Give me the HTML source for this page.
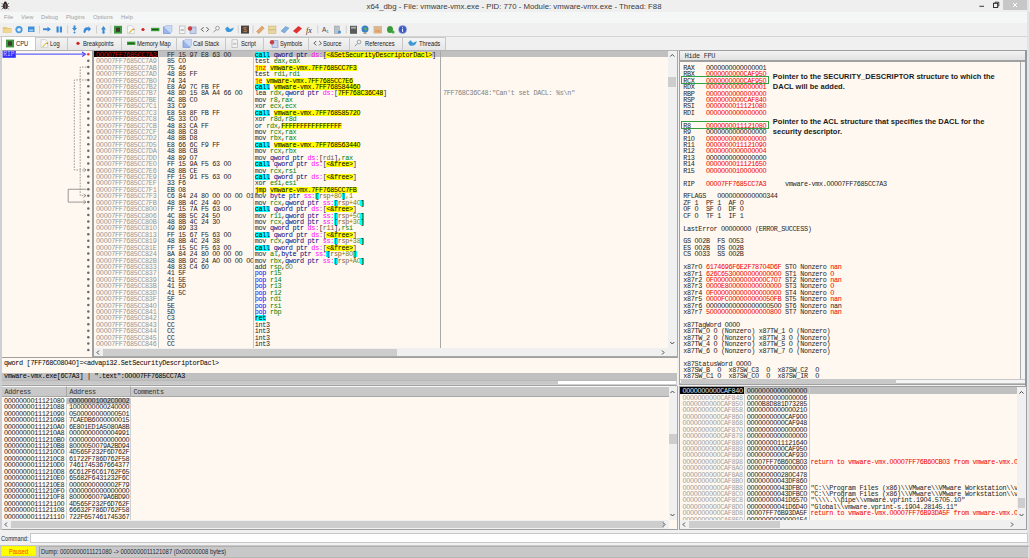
<!DOCTYPE html>
<html><head><meta charset="utf-8"><style>
*{margin:0;padding:0;box-sizing:border-box}
html,body{width:1030px;height:558px;overflow:hidden;background:#F0F0F0}
body{position:relative;font-family:"Liberation Sans",sans-serif}
.a{position:absolute}
.m{font-family:"Liberation Mono",monospace;font-size:6.8px;letter-spacing:-0.31px;line-height:6.43px;white-space:pre}
.s{font-family:"Liberation Sans",sans-serif;white-space:pre}
.cream{background:#FFF8F0}
.k{color:#262626}
.C{background:linear-gradient(transparent 0.62px,#00FFFF 0.62px,#00FFFF 7.05px,transparent 7.05px);color:#000}
.R{background:linear-gradient(transparent 0.62px,#00FFFF 0.62px,#00FFFF 7.05px,transparent 7.05px);color:#000}
.J{background:linear-gradient(transparent 0.62px,#FFFF00 0.62px,#FFFF00 7.05px,transparent 7.05px);color:#FF0000}
.M{background:linear-gradient(transparent 0.62px,#FFFF00 0.62px,#FFFF00 7.05px,transparent 7.05px);color:#000}
.Y{background:linear-gradient(transparent 0.62px,#FFFF00 0.62px,#FFFF00 7.05px,transparent 7.05px);color:#000}
.r{color:#008000}
.z{color:#000080}
.g{color:#FF00FF}
.b{background:linear-gradient(transparent 0.62px,#00FFFF 0.62px,#00FFFF 7.05px,transparent 7.05px);color:#000}
.q{color:#806030}
.n{color:#808000}
.p{color:#0000FF}
.red{color:#F00000}
.gr{color:#969696}
.tab{position:absolute;top:37px;height:13px;background:linear-gradient(#F4F4F4,#E6E6E6);border:1px solid #C8C8C8;border-bottom:none}
.tt{position:absolute;top:38.5px;font-size:6.3px;transform:scaleX(0.92);transform-origin:0 0;line-height:10px;color:#1A1A1A;white-space:pre}
.hdr{position:absolute;background:#C8C8C8;border-right:1px solid #A8A8A8;border-bottom:1px solid #A8A8A8;border-top:1px solid #F8F8F8}
</style></head>
<body>
<div class="a " style="left:0px;top:0px;width:1030px;height:11.5px;background:#EFEFEF"></div><div class="a s" style="left:366.6px;top:0.5px;width:300px;height:11px;font-size:7.8px;line-height:11px;color:#3A3A3A">x64_dbg - File: vmware-vmx.exe - PID: 770 - Module: vmware-vmx.exe - Thread: F88</div><div class="a " style="left:1003px;top:0px;width:24px;height:9.7px;background:#C7C7C7"></div><div class="a " style="left:0px;top:11.5px;width:1030px;height:11.5px;background:#F5F7F7"></div><div class="a s" style="left:4px;top:12.3px;width:40px;height:10px;font-size:6.2px;line-height:10px;color:#A0A0A0;transform:scaleX(0.93);transform-origin:0 0">File</div><div class="a s" style="left:21px;top:12.3px;width:40px;height:10px;font-size:6.2px;line-height:10px;color:#A0A0A0;transform:scaleX(0.93);transform-origin:0 0">View</div><div class="a s" style="left:41px;top:12.3px;width:40px;height:10px;font-size:6.2px;line-height:10px;color:#A0A0A0;transform:scaleX(0.93);transform-origin:0 0">Debug</div><div class="a s" style="left:66px;top:12.3px;width:40px;height:10px;font-size:6.2px;line-height:10px;color:#A0A0A0;transform:scaleX(0.93);transform-origin:0 0">Plugins</div><div class="a s" style="left:93px;top:12.3px;width:40px;height:10px;font-size:6.2px;line-height:10px;color:#A0A0A0;transform:scaleX(0.93);transform-origin:0 0">Options</div><div class="a s" style="left:121px;top:12.3px;width:40px;height:10px;font-size:6.2px;line-height:10px;color:#A0A0A0;transform:scaleX(0.93);transform-origin:0 0">Help</div><div class="a " style="left:0px;top:23px;width:1030px;height:12.5px;background:#F0F0F0"></div><svg class="a" style="left:0;top:0" width="420" height="36"><g><ellipse cx="5.3" cy="6" rx="2.6" ry="3.3" fill="#3A2A28"/><circle cx="5.3" cy="2.8" r="1.3" fill="#2A2020"/><path d="M1.5 3 L3 4.5 M9 3 L7.5 4.5 M1.2 6.5 H3 M9.4 6.5 H7.6 M1.5 9.5 L3 8 M9 9.5 L7.5 8" stroke="#707070" stroke-width="0.9"/><line x1="5.3" y1="4" x2="5.3" y2="9" stroke="#A0A8B0" stroke-width="0.6"/></g><rect x="979.4" y="5.8" width="4.6" height="0.9" fill="#202020"/></svg><svg class="a" style="left:0;top:0" width="1030" height="36"><rect x="979.4" y="5.8" width="4.6" height="0.9" fill="#202020"/><rect x="993.5" y="3.3" width="4.2" height="4.2" fill="none" stroke="#202020" stroke-width="0.9"/><path d="M995 3.2 V2.2 H998.8 V6 H997.8" fill="none" stroke="#202020" stroke-width="0.8"/><path d="M1013 3 L1017 7 M1017 3 L1013 7" stroke="#FFFFFF" stroke-width="1"/><path d="M2.8 27 H6.5 L7.5 28 H11.5 V32.7 H2.8 Z" fill="#E6C57A"/><rect x="3.5" y="29" width="7.5" height="3.2" fill="#F0D890"/><circle cx="19" cy="29.6" r="3.6" fill="#4A9BE0"/><circle cx="19" cy="29.8" r="1.8" fill="#E8F2FA"/><rect x="17.5" y="26" width="2" height="2" fill="#4A9BE0"/><rect x="28" y="26.5" width="6.5" height="5.5" fill="#3D8FD8"/><rect x="29.2" y="29.5" width="4" height="1.8" fill="#A8D0F0"/><rect x="39.2" y="25.5" width="0.8" height="8" fill="#C8C8C8"/><path d="M43 28.3 H47.5 V26.8 L51 29.3 L47.5 31.8 V30.3 H43 Z" fill="#3A8AD8"/><rect x="56.5" y="26.5" width="2.2" height="6" fill="#3A8AD8"/><rect x="59.8" y="26.5" width="2.2" height="6" fill="#3A8AD8"/><rect x="67.3" y="25.5" width="0.8" height="8" fill="#C8C8C8"/><path d="M73.5 25.5 H75.5 V28 H77 L74.5 31 L72 28 H73.5 Z" fill="#3A8AD8"/><circle cx="74.5" cy="32.6" r="1" fill="#3A8AD8"/><path d="M83.5 31.5 Q84 26.5 88.5 27.5 V26.3 L91 29 L88.5 31.7 V30.2 Q86 29.5 85.5 32 Z" fill="#3A8AD8"/><circle cx="84.5" cy="32" r="1" fill="#3A8AD8"/><rect x="96" y="25.5" width="0.8" height="8" fill="#C8C8C8"/><path d="M102.5 33.5 V29.5 H101 L103.5 26 L106 29.5 H104.5 V33.5 Z" fill="#3A8AD8"/><circle cx="103.5" cy="32.6" r="1" fill="#3A8AD8"/><rect x="110.4" y="25.5" width="0.8" height="8" fill="#C8C8C8"/><g id="ic_cpu"><rect x="114" y="25.8" width="8" height="7.8" fill="#3C9A3C"/><rect x="116" y="27.6" width="4" height="4.2" fill="#403830"/></g><g id="ic_log"><path d="M127.5 25.8 H132 L134.2 28 V33.6 H127.5 Z" fill="#F8F8F8" stroke="#B8B8B8" stroke-width="0.5"/><path d="M129 33 L133.5 28.5" stroke="#D8C040" stroke-width="1.1"/><circle cx="134" cy="29.5" r="0.6" fill="#E04040"/></g><g id="ic_bp"><circle cx="143" cy="29.5" r="1.6" fill="#D02020"/></g><g id="ic_mem"><rect x="151" y="27.8" width="8.4" height="3.4" fill="#3AA03A"/><rect x="152" y="29" width="6.4" height="1" fill="#205020"/></g><g id="ic_cs"><rect x="163.5" y="27" width="7" height="6.5" fill="#98B4EC" stroke="#6A88C8" stroke-width="0.6"/><path d="M164 27 L166 25.5 H172 V31.5 L170.5 33" fill="#C8D8F4" stroke="#8AA0D0" stroke-width="0.4"/></g><g id="ic_script"><rect x="179.5" y="26" width="5.5" height="7.5" fill="#F4F4F4" stroke="#A8A8A8" stroke-width="0.6"/><rect x="180.5" y="29" width="3.5" height="2" fill="#C8C8C8"/></g><g id="ic_sym"><rect x="190" y="27" width="6" height="6.5" fill="#C8D4EC" stroke="#6080C0" stroke-width="0.5"/><circle cx="190" cy="28.5" r="2.2" fill="#C84040"/></g><g id="ic_src"><path d="M203.5 27.2 L201.3 29.4 L203.5 31.6 M206.5 27.2 L208.7 29.4 L206.5 31.6" fill="none" stroke="#404040" stroke-width="0.9"/></g><g id="ic_refs"><circle cx="217.5" cy="28.2" r="1.9" fill="none" stroke="#909090" stroke-width="0.8"/><path d="M216 29.8 L213.5 32.3" stroke="#909090" stroke-width="1"/></g><g id="ic_thr"><path d="M225 28.5 Q228 27 230 29 L234 27.5 L232.5 30.5 Q230 33 226.5 31.5 Z" fill="#3A98D8"/><circle cx="227.5" cy="28" r="1.2" fill="#3A98D8"/></g><rect x="237.8" y="25.5" width="0.8" height="8" fill="#C8C8C8"/><rect x="241" y="25.6" width="8" height="8" fill="#4A4440"/><text x="243" y="32.3" font-family="Liberation Sans" font-size="7" fill="#D08850">$</text><rect x="252.6" y="25.5" width="0.8" height="8" fill="#C8C8C8"/><path d="M256.5 31.5 L262 26 L264.2 28.2 L258.7 33.7 Z" fill="#E0A870" stroke="#C88850" stroke-width="0.5"/><rect x="268.5" y="26" width="7.5" height="3.5" fill="#E8D8A0" stroke="#C0A060" stroke-width="0.4"/><rect x="268.5" y="30" width="7.5" height="3.5" fill="#E8D8A0" stroke="#C0A060" stroke-width="0.4"/><path d="M281 31 L285.5 26.5 L289 28 L284.5 33 Z" fill="#80B0E0" stroke="#5080C0" stroke-width="0.4"/><path d="M293 31 L298.5 26 L302 28.5 L296.5 33.5 Z" fill="#E03030"/><text x="306" y="32.5" font-family="Liberation Serif" font-style="italic" font-size="8" fill="#303030">fx</text><rect x="317.4" y="25.5" width="0.8" height="8" fill="#C8C8C8"/><text x="322" y="32.3" font-family="Liberation Sans" font-size="6.5" fill="#404040">A</text><text x="326.5" y="32.5" font-family="Liberation Sans" font-size="4" fill="#404040">1</text><rect x="334.3" y="26" width="5" height="7.5" fill="#B8C0C8" stroke="#808890" stroke-width="0.4"/><circle cx="339.5" cy="32" r="1.5" fill="#3A90D8"/><rect x="345.8" y="25.5" width="0.8" height="8" fill="#C8C8C8"/><rect x="350" y="25.8" width="7" height="8" fill="#5A5A5A"/><rect x="351" y="26.8" width="5" height="1.8" fill="#B0B0B0"/><circle cx="365" cy="29" r="3.5" fill="#3A80C8"/><path d="M363 27 Q365 28.5 366.5 27.5 Q367.5 30 365.5 31" fill="#60A860"/><rect x="363.5" y="32.5" width="3" height="1.2" fill="#A08060"/><rect x="373.5" y="26" width="8.5" height="7.5" fill="#D8B890"/><rect x="375" y="30" width="5.5" height="2.5" fill="#E8A060"/><ellipse cx="390" cy="29.5" rx="3" ry="3.6" fill="#3A9A3A"/><circle cx="393" cy="32" r="1.6" fill="#40B040"/><circle cx="402.6" cy="29.5" r="4" fill="#3A58C8" stroke="#A8B0C8" stroke-width="0.5"/><rect x="402.1" y="28.6" width="1" height="3.3" fill="#FFF"/><circle cx="402.6" cy="27.3" r="0.55" fill="#FFF"/></svg><div class="a " style="left:0px;top:35.5px;width:1030px;height:14.5px;background:#F0F0F0"></div><div class="a " style="left:0px;top:35.6px;width:1030px;height:0.9px;background:#D4D4D4"></div><div class="tab" style="left:35px;width:33px"></div><div class="tt" style="left:50px">Log</div><div class="tab" style="left:67px;width:55px"></div><div class="tt" style="left:83px">Breakpoints</div><div class="tab" style="left:121px;width:56px"></div><div class="tt" style="left:137px">Memory Map</div><div class="tab" style="left:176px;width:50px"></div><div class="tt" style="left:193px">Call Stack</div><div class="tab" style="left:225px;width:39px"></div><div class="tt" style="left:241px">Script</div><div class="tab" style="left:263px;width:45.5px"></div><div class="tt" style="left:280px">Symbols</div><div class="tab" style="left:307.5px;width:42.0px"></div><div class="tt" style="left:323px">Source</div><div class="tab" style="left:348.5px;width:54.0px"></div><div class="tt" style="left:365px">References</div><div class="tab" style="left:401.5px;width:44.5px"></div><div class="tt" style="left:419px">Threads</div><div class="a" style="left:1px;top:36px;width:35px;height:14.5px;background:#FFF;border:1px solid #C8C8C8;border-bottom:none"></div><div class="tt" style="left:16px">CPU</div><svg class="a" style="left:0;top:0" width="450" height="52"><use href="#ic_cpu" transform="translate(-108,13.8)"/><use href="#ic_log" transform="translate(-86.5,13.8)"/><use href="#ic_bp" transform="translate(-65,13.8)"/><use href="#ic_mem" transform="translate(-24,13.8)"/><use href="#ic_cs" transform="translate(19.5,13.8)"/><use href="#ic_script" transform="translate(52.5,13.8)"/><use href="#ic_sym" transform="translate(82,13.8)"/><use href="#ic_src" transform="translate(112.7,13.8)"/><use href="#ic_refs" transform="translate(141.5,13.8)"/><use href="#ic_thr" transform="translate(183,13.8)"/></svg><div class="a " style="left:0px;top:49.5px;width:1030px;height:0.8px;background:#C8C8C8"></div><div class="a " style="left:1px;top:50px;width:677px;height:308px;background:#A8A8A8"></div><div class="a cream" style="left:2px;top:50px;width:90.3px;height:307px;"></div><div class="a " style="left:92.3px;top:50px;width:1.4px;height:307px;background:#A0A0A0"></div><div class="a cream" style="left:93.7px;top:50px;width:574.3px;height:298.3px;"></div><div class="a " style="left:2px;top:50px;width:675px;height:0.9px;background:#B4B4B4"></div><div class="a " style="left:158px;top:51.0px;width:510px;height:6.43px;background:#C0C0C0"></div><div class="a " style="left:93.8px;top:51.0px;width:64px;height:6.43px;background:#000"></div><div class="a " style="left:157.7px;top:51.0px;width:0.8px;height:297.3px;background:#C8C8C8"></div><div class="a " style="left:253.3px;top:51.0px;width:0.8px;height:297.3px;background:#C8C8C8"></div><div class="a " style="left:440.2px;top:51.0px;width:0.8px;height:297.3px;background:#A8A8A8"></div><div class="a m" style="left:96.1px;top:51.80px;"><span style="color:#D01010">OOOO7FF7685CC7A3</span></div><div class="a m" style="left:96.1px;top:58.23px;"><span style="color:#969696">OOOO7FF7685CC7A9</span></div><div class="a m" style="left:96.1px;top:64.66px;"><span style="color:#969696">OOOO7FF7685CC7AB</span></div><div class="a m" style="left:96.1px;top:71.09px;"><span style="color:#969696">OOOO7FF7685CC7AD</span></div><div class="a m" style="left:96.1px;top:77.52px;"><span style="color:#969696">OOOO7FF7685CC7BO</span></div><div class="a m" style="left:96.1px;top:83.95px;"><span style="color:#969696">OOOO7FF7685CC7B2</span></div><div class="a m" style="left:96.1px;top:90.38px;"><span style="color:#969696">OOOO7FF7685CC7B7</span></div><div class="a m" style="left:96.1px;top:96.81px;"><span style="color:#969696">OOOO7FF7685CC7BE</span></div><div class="a m" style="left:96.1px;top:103.24px;"><span style="color:#969696">OOOO7FF7685CC7C1</span></div><div class="a m" style="left:96.1px;top:109.67px;"><span style="color:#969696">OOOO7FF7685CC7C3</span></div><div class="a m" style="left:96.1px;top:116.10px;"><span style="color:#969696">OOOO7FF7685CC7C8</span></div><div class="a m" style="left:96.1px;top:122.53px;"><span style="color:#969696">OOOO7FF7685CC7CB</span></div><div class="a m" style="left:96.1px;top:128.96px;"><span style="color:#969696">OOOO7FF7685CC7CF</span></div><div class="a m" style="left:96.1px;top:135.39px;"><span style="color:#969696">OOOO7FF7685CC7D2</span></div><div class="a m" style="left:96.1px;top:141.82px;"><span style="color:#969696">OOOO7FF7685CC7D5</span></div><div class="a m" style="left:96.1px;top:148.25px;"><span style="color:#969696">OOOO7FF7685CC7DA</span></div><div class="a m" style="left:96.1px;top:154.68px;"><span style="color:#969696">OOOO7FF7685CC7DD</span></div><div class="a m" style="left:96.1px;top:161.11px;"><span style="color:#969696">OOOO7FF7685CC7EO</span></div><div class="a m" style="left:96.1px;top:167.54px;"><span style="color:#969696">OOOO7FF7685CC7E6</span></div><div class="a m" style="left:96.1px;top:173.97px;"><span style="color:#969696">OOOO7FF7685CC7E9</span></div><div class="a m" style="left:96.1px;top:180.40px;"><span style="color:#969696">OOOO7FF7685CC7EF</span></div><div class="a m" style="left:96.1px;top:186.83px;"><span style="color:#969696">OOOO7FF7685CC7F1</span></div><div class="a m" style="left:96.1px;top:193.26px;"><span style="color:#969696">OOOO7FF7685CC7F3</span></div><div class="a m" style="left:96.1px;top:199.69px;"><span style="color:#969696">OOOO7FF7685CC7FB</span></div><div class="a m" style="left:96.1px;top:206.12px;"><span style="color:#969696">OOOO7FF7685CC8OO</span></div><div class="a m" style="left:96.1px;top:212.55px;"><span style="color:#969696">OOOO7FF7685CC8O6</span></div><div class="a m" style="left:96.1px;top:218.98px;"><span style="color:#969696">OOOO7FF7685CC8OB</span></div><div class="a m" style="left:96.1px;top:225.41px;"><span style="color:#969696">OOOO7FF7685CC81O</span></div><div class="a m" style="left:96.1px;top:231.84px;"><span style="color:#969696">OOOO7FF7685CC813</span></div><div class="a m" style="left:96.1px;top:238.27px;"><span style="color:#969696">OOOO7FF7685CC819</span></div><div class="a m" style="left:96.1px;top:244.70px;"><span style="color:#969696">OOOO7FF7685CC81E</span></div><div class="a m" style="left:96.1px;top:251.13px;"><span style="color:#969696">OOOO7FF7685CC824</span></div><div class="a m" style="left:96.1px;top:257.56px;"><span style="color:#969696">OOOO7FF7685CC82B</span></div><div class="a m" style="left:96.1px;top:263.99px;"><span style="color:#969696">OOOO7FF7685CC833</span></div><div class="a m" style="left:96.1px;top:270.42px;"><span style="color:#969696">OOOO7FF7685CC837</span></div><div class="a m" style="left:96.1px;top:276.85px;"><span style="color:#969696">OOOO7FF7685CC839</span></div><div class="a m" style="left:96.1px;top:283.28px;"><span style="color:#969696">OOOO7FF7685CC83B</span></div><div class="a m" style="left:96.1px;top:289.71px;"><span style="color:#969696">OOOO7FF7685CC83D</span></div><div class="a m" style="left:96.1px;top:296.14px;"><span style="color:#969696">OOOO7FF7685CC83F</span></div><div class="a m" style="left:96.1px;top:302.57px;"><span style="color:#969696">OOOO7FF7685CC84O</span></div><div class="a m" style="left:96.1px;top:309.00px;"><span style="color:#969696">OOOO7FF7685CC841</span></div><div class="a m" style="left:96.1px;top:315.43px;"><span style="color:#969696">OOOO7FF7685CC842</span></div><div class="a m" style="left:96.1px;top:321.86px;"><span style="color:#969696">OOOO7FF7685CC843</span></div><div class="a m" style="left:96.1px;top:328.29px;"><span style="color:#969696">OOOO7FF7685CC844</span></div><div class="a m" style="left:96.1px;top:334.72px;"><span style="color:#969696">OOOO7FF7685CC845</span></div><div class="a m" style="left:96.1px;top:341.15px;"><span style="color:#969696">OOOO7FF7685CC846</span></div><div class="a m" style="left:96.1px;top:347.58px;"><span style="color:#969696">OOOO7FF7685CC847</span></div><div class="a" style="left:167px;top:51.0px;width:86px;height:297px;overflow:hidden"><div class="a m" style="left:0px;top:0.80px;color:#262626">FF 15 97 E8 63 OO</div><div class="a m" style="left:0px;top:7.23px;color:#262626">85 CO</div><div class="a m" style="left:0px;top:13.66px;color:#262626">75 46</div><div class="a m" style="left:0px;top:20.09px;color:#262626">48 85 FF</div><div class="a m" style="left:0px;top:26.52px;color:#262626">74 34</div><div class="a m" style="left:0px;top:32.95px;color:#262626">E8 A9 7C FB FF</div><div class="a m" style="left:0px;top:39.38px;color:#262626">48 8D 15 8A A4 66 OO</div><div class="a m" style="left:0px;top:45.81px;color:#262626">4C 8B CO</div><div class="a m" style="left:0px;top:52.24px;color:#262626">33 C9</div><div class="a m" style="left:0px;top:58.67px;color:#262626">E8 58 8F FB FF</div><div class="a m" style="left:0px;top:65.10px;color:#262626">45 33 CO</div><div class="a m" style="left:0px;top:71.53px;color:#262626">48 83 CA FF</div><div class="a m" style="left:0px;top:77.96px;color:#262626">48 8B C8</div><div class="a m" style="left:0px;top:84.39px;color:#262626">48 8B D8</div><div class="a m" style="left:0px;top:90.82px;color:#262626">E8 66 6C F9 FF</div><div class="a m" style="left:0px;top:97.25px;color:#262626">48 8B CB</div><div class="a m" style="left:0px;top:103.68px;color:#262626">48 89 O7</div><div class="a m" style="left:0px;top:110.11px;color:#262626">FF 15 9A F5 63 OO</div><div class="a m" style="left:0px;top:116.54px;color:#262626">48 8B CE</div><div class="a m" style="left:0px;top:122.97px;color:#262626">FF 15 91 F5 63 OO</div><div class="a m" style="left:0px;top:129.40px;color:#262626">33 F6</div><div class="a m" style="left:0px;top:135.83px;color:#262626">EB O8</div><div class="a m" style="left:0px;top:142.26px;color:#262626">C6 84 24 8O OO OO OO O1</div><div class="a m" style="left:0px;top:148.69px;color:#262626">48 8B 4C 24 4O</div><div class="a m" style="left:0px;top:155.12px;color:#262626">FF 15 7A F5 63 OO</div><div class="a m" style="left:0px;top:161.55px;color:#262626">4C 8B 5C 24 5O</div><div class="a m" style="left:0px;top:167.98px;color:#262626">48 8B 4C 24 3O</div><div class="a m" style="left:0px;top:174.41px;color:#262626">49 89 33</div><div class="a m" style="left:0px;top:180.84px;color:#262626">FF 15 67 F5 63 OO</div><div class="a m" style="left:0px;top:187.27px;color:#262626">48 8B 4C 24 38</div><div class="a m" style="left:0px;top:193.70px;color:#262626">FF 15 5C F5 63 OO</div><div class="a m" style="left:0px;top:200.13px;color:#262626">8A 84 24 8O OO OO OO</div><div class="a m" style="left:0px;top:206.56px;color:#262626">48 8B 9C 24 AO OO OO OO</div><div class="a m" style="left:0px;top:212.99px;color:#262626">48 83 C4 6O</div><div class="a m" style="left:0px;top:219.42px;color:#262626">41 5F</div><div class="a m" style="left:0px;top:225.85px;color:#262626">41 5E</div><div class="a m" style="left:0px;top:232.28px;color:#262626">41 5D</div><div class="a m" style="left:0px;top:238.71px;color:#262626">41 5C</div><div class="a m" style="left:0px;top:245.14px;color:#262626">5F</div><div class="a m" style="left:0px;top:251.57px;color:#262626">5E</div><div class="a m" style="left:0px;top:258.00px;color:#262626">5D</div><div class="a m" style="left:0px;top:264.43px;color:#262626">C3</div><div class="a m" style="left:0px;top:270.86px;color:#262626">CC</div><div class="a m" style="left:0px;top:277.29px;color:#262626">CC</div><div class="a m" style="left:0px;top:283.72px;color:#262626">CC</div><div class="a m" style="left:0px;top:290.15px;color:#262626">CC</div><div class="a m" style="left:0px;top:296.58px;color:#262626">CC</div></div><div class="a m" style="left:254.8px;top:51.80px;"><span class="C">call</span><span class="k"> </span><span class="z">qword ptr </span><span class="g">ds:</span><span class="k">[</span><span class="Y">&lt;&amp;SetSecurityDescriptorDacl&gt;</span><span class="k">]</span></div><div class="a m" style="left:254.8px;top:58.23px;"><span class="k">test</span><span class="k"> </span><span class="r">eax</span><span class="k">,</span><span class="r">eax</span></div><div class="a m" style="left:254.8px;top:64.66px;"><span class="J">jnz</span><span class="k"> </span><span class="Y">vmware-vmx.7FF7685CC7F3</span></div><div class="a m" style="left:254.8px;top:71.09px;"><span class="k">test</span><span class="k"> </span><span class="r">rdi</span><span class="k">,</span><span class="r">rdi</span></div><div class="a m" style="left:254.8px;top:77.52px;"><span class="J">je</span><span class="k"> </span><span class="Y">vmware-vmx.7FF7685CC7E6</span></div><div class="a m" style="left:254.8px;top:83.95px;"><span class="C">call</span><span class="k"> </span><span class="Y">vmware-vmx.7FF76858446O</span></div><div class="a m" style="left:254.8px;top:90.38px;"><span class="k">lea</span><span class="k"> </span><span class="r">rdx</span><span class="k">,</span><span class="z">qword ptr </span><span class="g">ds:</span><span class="k">[</span><span class="Y">7FF768C36C48</span><span class="k">]</span></div><div class="a m" style="left:254.8px;top:96.81px;"><span class="k">mov</span><span class="k"> </span><span class="r">r8</span><span class="k">,</span><span class="r">rax</span></div><div class="a m" style="left:254.8px;top:103.24px;"><span class="k">xor</span><span class="k"> </span><span class="r">ecx</span><span class="k">,</span><span class="r">ecx</span></div><div class="a m" style="left:254.8px;top:109.67px;"><span class="C">call</span><span class="k"> </span><span class="Y">vmware-vmx.7FF76858572O</span></div><div class="a m" style="left:254.8px;top:116.10px;"><span class="k">xor</span><span class="k"> </span><span class="r">r8d</span><span class="k">,</span><span class="r">r8d</span></div><div class="a m" style="left:254.8px;top:122.53px;"><span class="k">or</span><span class="k"> </span><span class="r">rdx</span><span class="k">,</span><span class="Y">FFFFFFFFFFFFFFFF</span></div><div class="a m" style="left:254.8px;top:128.96px;"><span class="k">mov</span><span class="k"> </span><span class="r">rcx</span><span class="k">,</span><span class="r">rax</span></div><div class="a m" style="left:254.8px;top:135.39px;"><span class="k">mov</span><span class="k"> </span><span class="r">rbx</span><span class="k">,</span><span class="r">rax</span></div><div class="a m" style="left:254.8px;top:141.82px;"><span class="C">call</span><span class="k"> </span><span class="Y">vmware-vmx.7FF76856344O</span></div><div class="a m" style="left:254.8px;top:148.25px;"><span class="k">mov</span><span class="k"> </span><span class="r">rcx</span><span class="k">,</span><span class="r">rbx</span></div><div class="a m" style="left:254.8px;top:154.68px;"><span class="k">mov</span><span class="k"> </span><span class="z">qword ptr </span><span class="g">ds:</span><span class="k">[</span><span class="q">rdi</span><span class="k">]</span><span class="k">,</span><span class="r">rax</span></div><div class="a m" style="left:254.8px;top:161.11px;"><span class="C">call</span><span class="k"> </span><span class="z">qword ptr </span><span class="g">ds:</span><span class="k">[</span><span class="Y">&lt;&amp;free&gt;</span><span class="k">]</span></div><div class="a m" style="left:254.8px;top:167.54px;"><span class="k">mov</span><span class="k"> </span><span class="r">rcx</span><span class="k">,</span><span class="r">rsi</span></div><div class="a m" style="left:254.8px;top:173.97px;"><span class="C">call</span><span class="k"> </span><span class="z">qword ptr </span><span class="g">ds:</span><span class="k">[</span><span class="Y">&lt;&amp;free&gt;</span><span class="k">]</span></div><div class="a m" style="left:254.8px;top:180.40px;"><span class="k">xor</span><span class="k"> </span><span class="r">esi</span><span class="k">,</span><span class="r">esi</span></div><div class="a m" style="left:254.8px;top:186.83px;"><span class="M">jmp</span><span class="k"> </span><span class="Y">vmware-vmx.7FF7685CC7FB</span></div><div class="a m" style="left:254.8px;top:193.26px;"><span class="k">mov</span><span class="k"> </span><span class="z">byte ptr </span><span class="g">ss:</span><span class="b">[</span><span class="q">rsp</span><span class="n">+8O</span><span class="b">]</span><span class="n">,1</span></div><div class="a m" style="left:254.8px;top:199.69px;"><span class="k">mov</span><span class="k"> </span><span class="r">rcx</span><span class="k">,</span><span class="z">qword ptr </span><span class="g">ss:</span><span class="b">[</span><span class="q">rsp</span><span class="n">+4O</span><span class="b">]</span></div><div class="a m" style="left:254.8px;top:206.12px;"><span class="C">call</span><span class="k"> </span><span class="z">qword ptr </span><span class="g">ds:</span><span class="k">[</span><span class="Y">&lt;&amp;free&gt;</span><span class="k">]</span></div><div class="a m" style="left:254.8px;top:212.55px;"><span class="k">mov</span><span class="k"> </span><span class="r">r11</span><span class="k">,</span><span class="z">qword ptr </span><span class="g">ss:</span><span class="b">[</span><span class="q">rsp</span><span class="n">+5O</span><span class="b">]</span></div><div class="a m" style="left:254.8px;top:218.98px;"><span class="k">mov</span><span class="k"> </span><span class="r">rcx</span><span class="k">,</span><span class="z">qword ptr </span><span class="g">ss:</span><span class="b">[</span><span class="q">rsp</span><span class="n">+3O</span><span class="b">]</span></div><div class="a m" style="left:254.8px;top:225.41px;"><span class="k">mov</span><span class="k"> </span><span class="z">qword ptr </span><span class="g">ds:</span><span class="k">[</span><span class="q">r11</span><span class="k">]</span><span class="k">,</span><span class="r">rsi</span></div><div class="a m" style="left:254.8px;top:231.84px;"><span class="C">call</span><span class="k"> </span><span class="z">qword ptr </span><span class="g">ds:</span><span class="k">[</span><span class="Y">&lt;&amp;free&gt;</span><span class="k">]</span></div><div class="a m" style="left:254.8px;top:238.27px;"><span class="k">mov</span><span class="k"> </span><span class="r">rcx</span><span class="k">,</span><span class="z">qword ptr </span><span class="g">ss:</span><span class="b">[</span><span class="q">rsp</span><span class="n">+38</span><span class="b">]</span></div><div class="a m" style="left:254.8px;top:244.70px;"><span class="C">call</span><span class="k"> </span><span class="z">qword ptr </span><span class="g">ds:</span><span class="k">[</span><span class="Y">&lt;&amp;free&gt;</span><span class="k">]</span></div><div class="a m" style="left:254.8px;top:251.13px;"><span class="k">mov</span><span class="k"> </span><span class="r">al</span><span class="k">,</span><span class="z">byte ptr </span><span class="g">ss:</span><span class="b">[</span><span class="q">rsp</span><span class="n">+8O</span><span class="b">]</span></div><div class="a m" style="left:254.8px;top:257.56px;"><span class="k">mov</span><span class="k"> </span><span class="r">rbx</span><span class="k">,</span><span class="z">qword ptr </span><span class="g">ss:</span><span class="b">[</span><span class="q">rsp</span><span class="n">+AO</span><span class="b">]</span></div><div class="a m" style="left:254.8px;top:263.99px;"><span class="k">add</span><span class="k"> </span><span class="r">rsp</span><span class="k">,</span><span class="n">6O</span></div><div class="a m" style="left:254.8px;top:270.42px;"><span class="p">pop</span><span class="k"> </span><span class="r">r15</span></div><div class="a m" style="left:254.8px;top:276.85px;"><span class="p">pop</span><span class="k"> </span><span class="r">r14</span></div><div class="a m" style="left:254.8px;top:283.28px;"><span class="p">pop</span><span class="k"> </span><span class="r">r13</span></div><div class="a m" style="left:254.8px;top:289.71px;"><span class="p">pop</span><span class="k"> </span><span class="r">r12</span></div><div class="a m" style="left:254.8px;top:296.14px;"><span class="p">pop</span><span class="k"> </span><span class="r">rdi</span></div><div class="a m" style="left:254.8px;top:302.57px;"><span class="p">pop</span><span class="k"> </span><span class="r">rsi</span></div><div class="a m" style="left:254.8px;top:309.00px;"><span class="p">pop</span><span class="k"> </span><span class="r">rbp</span></div><div class="a m" style="left:254.8px;top:315.43px;"><span class="R">ret</span></div><div class="a m" style="left:254.8px;top:321.86px;"><span class="k">int3</span></div><div class="a m" style="left:254.8px;top:328.29px;"><span class="k">int3</span></div><div class="a m" style="left:254.8px;top:334.72px;"><span class="k">int3</span></div><div class="a m" style="left:254.8px;top:341.15px;"><span class="k">int3</span></div><div class="a m" style="left:254.8px;top:347.58px;"><span class="k">int3</span></div><div class="a m" style="left:443px;top:90.38px;color:#808080">7FF768C36C48:"Can't set DACL: %s\n"</div><svg class="a" style="left:0;top:0" width="100" height="360"><circle cx="88.3" cy="54.22" r="1.25" fill="#FF3030"/><circle cx="88.3" cy="60.64" r="1.25" fill="#686868"/><circle cx="88.3" cy="67.08" r="1.25" fill="#686868"/><circle cx="88.3" cy="73.50" r="1.25" fill="#686868"/><circle cx="88.3" cy="79.94" r="1.25" fill="#686868"/><circle cx="88.3" cy="86.37" r="1.25" fill="#686868"/><circle cx="88.3" cy="92.80" r="1.25" fill="#686868"/><circle cx="88.3" cy="99.22" r="1.25" fill="#686868"/><circle cx="88.3" cy="105.66" r="1.25" fill="#686868"/><circle cx="88.3" cy="112.09" r="1.25" fill="#686868"/><circle cx="88.3" cy="118.52" r="1.25" fill="#686868"/><circle cx="88.3" cy="124.94" r="1.25" fill="#686868"/><circle cx="88.3" cy="131.38" r="1.25" fill="#686868"/><circle cx="88.3" cy="137.81" r="1.25" fill="#686868"/><circle cx="88.3" cy="144.23" r="1.25" fill="#686868"/><circle cx="88.3" cy="150.66" r="1.25" fill="#686868"/><circle cx="88.3" cy="157.09" r="1.25" fill="#686868"/><circle cx="88.3" cy="163.53" r="1.25" fill="#686868"/><circle cx="88.3" cy="169.96" r="1.25" fill="#686868"/><circle cx="88.3" cy="176.38" r="1.25" fill="#686868"/><circle cx="88.3" cy="182.81" r="1.25" fill="#686868"/><circle cx="88.3" cy="189.25" r="1.25" fill="#686868"/><circle cx="88.3" cy="195.67" r="1.25" fill="#686868"/><circle cx="88.3" cy="202.10" r="1.25" fill="#686868"/><circle cx="88.3" cy="208.53" r="1.25" fill="#686868"/><circle cx="88.3" cy="214.97" r="1.25" fill="#686868"/><circle cx="88.3" cy="221.40" r="1.25" fill="#686868"/><circle cx="88.3" cy="227.82" r="1.25" fill="#686868"/><circle cx="88.3" cy="234.25" r="1.25" fill="#686868"/><circle cx="88.3" cy="240.69" r="1.25" fill="#686868"/><circle cx="88.3" cy="247.11" r="1.25" fill="#686868"/><circle cx="88.3" cy="253.54" r="1.25" fill="#686868"/><circle cx="88.3" cy="259.97" r="1.25" fill="#686868"/><circle cx="88.3" cy="266.40" r="1.25" fill="#686868"/><circle cx="88.3" cy="272.83" r="1.25" fill="#686868"/><circle cx="88.3" cy="279.26" r="1.25" fill="#686868"/><circle cx="88.3" cy="285.69" r="1.25" fill="#686868"/><circle cx="88.3" cy="292.12" r="1.25" fill="#686868"/><circle cx="88.3" cy="298.55" r="1.25" fill="#686868"/><circle cx="88.3" cy="304.98" r="1.25" fill="#686868"/><circle cx="88.3" cy="311.41" r="1.25" fill="#686868"/><circle cx="88.3" cy="317.84" r="1.25" fill="#686868"/><circle cx="88.3" cy="324.27" r="1.25" fill="#686868"/><circle cx="88.3" cy="330.70" r="1.25" fill="#686868"/><circle cx="88.3" cy="337.13" r="1.25" fill="#686868"/><circle cx="88.3" cy="343.56" r="1.25" fill="#686868"/><circle cx="88.3" cy="349.99" r="1.25" fill="#686868"/><rect x="2.6" y="50.8" width="13.2" height="7" fill="#3030FF"/><line x1="15" y1="54.22" x2="84" y2="54.22" stroke="#6060FF" stroke-width="1.3"/><path d="M82 52.02 L85.5 54.22 L82 56.42" fill="none" stroke="#4040FF" stroke-width="1.1"/><text x="3.2" y="56.42" font-family="Liberation Mono" font-size="6.3" fill="#C0C0FF">RIP</text><path d="M86.5 67.08 H80.2 V195.67 H85.5" fill="none" stroke="#808080" stroke-width="0.8" stroke-dasharray="1.6,1.3"/><path d="M83.5 193.87 L86 195.67 L83.5 197.47" fill="none" stroke="#808080" stroke-width="0.8"/><path d="M86.5 79.94 H74.3 V169.96 H85.5" fill="none" stroke="#808080" stroke-width="0.8" stroke-dasharray="1.6,1.3"/><path d="M83.5 168.16 L86 169.96 L83.5 171.76" fill="none" stroke="#808080" stroke-width="0.8"/><path d="M86.5 189.25 H68.2 V202.10 H85.5" fill="none" stroke="#808080" stroke-width="0.8" /><path d="M83.5 200.30 L86 202.10 L83.5 203.91" fill="none" stroke="#808080" stroke-width="0.8"/></svg><div class="a " style="left:668px;top:51px;width:9px;height:297.3px;background:#F0F0F0"></div><div class="a " style="left:668px;top:76.6px;width:8px;height:10px;background:#CDCDCD"></div><div class="a " style="left:93.7px;top:348.3px;width:583.3px;height:8.2px;background:#F0F0F0"></div><div class="a " style="left:103.2px;top:349px;width:294px;height:7px;background:#CDCDCD"></div><div class="a " style="left:2px;top:356.5px;width:675px;height:1.2px;background:#A0A0A0"></div><div class="a cream" style="left:2px;top:357.7px;width:675px;height:27px;"></div><div class="a " style="left:2px;top:372.5px;width:675px;height:7.3px;background:#C0C0C0"></div><div class="a " style="left:2px;top:379.8px;width:675px;height:5px;background:#FFFFFF;border-top:1px solid #B8B8B8;border-bottom:1px solid #D0D0D0;border-right:1px solid #D0D0D0"></div><div class="a " style="left:2px;top:380.6px;width:556px;height:3.6px;background:#C8C8C8"></div><div class="a " style="left:2px;top:384.5px;width:675px;height:1.5px;background:#A0A0A0"></div><div class="a m" style="left:4px;top:359.70px;color:#000">qword [7FF768CO8O4O]=&lt;advapi32.SetSecurityDescriptorDacl&gt;</div><div class="a m" style="left:4px;top:373.00px;color:#000">vmware-vmx.exe[6C7A3] | ".text":OOOO7FF7685CC7A3</div><div class="a " style="left:1px;top:386px;width:677px;height:144px;background:#A8A8A8"></div><div class="a cream" style="left:2px;top:386px;width:675px;height:143px;"></div><div class="hdr" style="left:2px;top:386.3px;width:65px;height:11.2px"></div><div class="hdr" style="left:67px;top:386.3px;width:64px;height:11.2px"></div><div class="hdr" style="left:131px;top:386.3px;width:537.5px;height:11.2px;border-right:none"></div><div class="a m" style="left:4.5px;top:389.30px;color:#303030">Address</div><div class="a m" style="left:69.5px;top:389.30px;color:#303030">Address</div><div class="a m" style="left:133.5px;top:389.30px;color:#303030">Comments</div><div class="a " style="left:67px;top:397.8px;width:63.5px;height:6.43px;background:#C0C0C0"></div><div class="a " style="left:66.3px;top:397.8px;width:0.8px;height:122px;background:#D0D0D0"></div><div class="a " style="left:130.3px;top:397.8px;width:0.8px;height:122px;background:#D0D0D0"></div><div class="a m" style="left:4px;top:398.00px;color:#262626">OOOOOOOO11121O8O</div><div class="a m" style="left:4px;top:404.43px;color:#262626">OOOOOOOO11121O88</div><div class="a m" style="left:4px;top:410.86px;color:#262626">OOOOOOOO11121O9O</div><div class="a m" style="left:4px;top:417.29px;color:#262626">OOOOOOOO11121O98</div><div class="a m" style="left:4px;top:423.72px;color:#262626">OOOOOOOO11121OAO</div><div class="a m" style="left:4px;top:430.15px;color:#262626">OOOOOOOO11121OA8</div><div class="a m" style="left:4px;top:436.58px;color:#262626">OOOOOOOO11121OBO</div><div class="a m" style="left:4px;top:443.01px;color:#262626">OOOOOOOO11121OB8</div><div class="a m" style="left:4px;top:449.44px;color:#262626">OOOOOOOO11121OCO</div><div class="a m" style="left:4px;top:455.87px;color:#262626">OOOOOOOO11121OC8</div><div class="a m" style="left:4px;top:462.30px;color:#262626">OOOOOOOO11121ODO</div><div class="a m" style="left:4px;top:468.73px;color:#262626">OOOOOOOO11121OD8</div><div class="a m" style="left:4px;top:475.16px;color:#262626">OOOOOOOO11121OEO</div><div class="a m" style="left:4px;top:481.59px;color:#262626">OOOOOOOO11121OE8</div><div class="a m" style="left:4px;top:488.02px;color:#262626">OOOOOOOO11121OFO</div><div class="a m" style="left:4px;top:494.45px;color:#262626">OOOOOOOO11121OF8</div><div class="a m" style="left:4px;top:500.88px;color:#262626">OOOOOOOO111211OO</div><div class="a m" style="left:4px;top:507.31px;color:#262626">OOOOOOOO111211O8</div><div class="a m" style="left:4px;top:513.74px;color:#262626">OOOOOOOO1112111O</div><div class="a m" style="left:69px;top:398.00px;color:#262626">OOOOOOO1OO2COOO2</div><div class="a m" style="left:69px;top:404.43px;color:#262626">1OOOOOOOOO24OOOO</div><div class="a m" style="left:69px;top:410.86px;color:#262626">O5OOOOOOOOOOO5O1</div><div class="a m" style="left:69px;top:417.29px;color:#262626">7CAEDB6OOOOOOO15</div><div class="a m" style="left:69px;top:423.72px;color:#262626">6E8O1ED1A5O8OA8B</div><div class="a m" style="left:69px;top:430.15px;color:#262626">OOOOOOOOOOOO4991</div><div class="a m" style="left:69px;top:436.58px;color:#262626">OOOOOOOOOOOOOOOO</div><div class="a m" style="left:69px;top:443.01px;color:#262626">8OOOO5OO79A2BD94</div><div class="a m" style="left:69px;top:449.44px;color:#262626">4D565F232F6D762F</div><div class="a m" style="left:69px;top:455.87px;color:#262626">61722F786D762F58</div><div class="a m" style="left:69px;top:462.30px;color:#262626">7461745367664377</div><div class="a m" style="left:69px;top:468.73px;color:#262626">6C612F6C61762F65</div><div class="a m" style="left:69px;top:475.16px;color:#262626">65682F6431232F6C</div><div class="a m" style="left:69px;top:481.59px;color:#262626">OOOOOOOOOOOO2F79</div><div class="a m" style="left:69px;top:488.02px;color:#262626">OOOOOOOOOOOOOOOO</div><div class="a m" style="left:69px;top:494.45px;color:#262626">8OOOO6OO79A6BD9O</div><div class="a m" style="left:69px;top:500.88px;color:#262626">4D565F232F6D762F</div><div class="a m" style="left:69px;top:507.31px;color:#262626">66632F786D762F58</div><div class="a m" style="left:69px;top:513.74px;color:#262626">722F657461745367</div><div class="a " style="left:668.5px;top:386px;width:8.5px;height:134px;background:#F0F0F0"></div><div class="a " style="left:669px;top:434px;width:7.5px;height:10px;background:#CDCDCD"></div><div class="a " style="left:2px;top:520px;width:666.5px;height:8.5px;background:#F0F0F0"></div><div class="a " style="left:11px;top:521px;width:653px;height:7px;background:#CDCDCD"></div><div class="a " style="left:2px;top:528.5px;width:675px;height:1px;background:#A0A0A0"></div><div class="a " style="left:679px;top:50px;width:348px;height:335px;background:#A0A0A0"></div><div class="a " style="left:680px;top:51px;width:345px;height:9.4px;background:linear-gradient(#F2F2F2,#E2E2E2)"></div><div class="a m" style="left:684.8px;top:53.20px;color:#303030">Hide FPU</div><div class="a cream" style="left:680px;top:62px;width:340px;height:317px;"></div><div class="a " style="left:1020px;top:62px;width:5.5px;height:317.5px;background:#F4F4F4;border-left:1.2px solid #ABABA8;border-right:1px solid #C0C0C0"></div><div class="a " style="left:680px;top:379.3px;width:345px;height:5.2px;background:#F4F4F4;border-top:1px solid #C8C8C8;border-bottom:1px solid #C0C0C0"></div><div class="a " style="left:681px;top:380.3px;width:215px;height:3.4px;background:#C8C8C8"></div><div class="a " style="left:1025px;top:50px;width:1.6px;height:336px;background:#9498A0"></div><div class="a " style="left:1026.6px;top:0px;width:2.2px;height:558px;background:#E4E4E4"></div><div class="a " style="left:1028.8px;top:11.5px;width:1.2px;height:546.5px;background:#D0D8F0"></div><div class="a m" style="left:683.3px;top:64.80px;"><span class="k">RAX   </span><span class="k">OOOOOOOOOOOOOOO1</span></div><div class="a m" style="left:683.3px;top:71.23px;"><span class="k">RBX   </span><span class="red">OOOOOOOOOOCAF95O</span></div><div class="a m" style="left:683.3px;top:77.66px;"><span class="k">RCX   </span><span class="red">OOOOOOOOOOCAF95O</span></div><div class="a m" style="left:683.3px;top:84.09px;"><span class="k">RDX   </span><span class="red">OOOOOOOOOOOOOOO1</span></div><div class="a m" style="left:683.3px;top:90.52px;"><span class="k">RBP   </span><span class="red">OOOOOOOOOOOOOOOO</span></div><div class="a m" style="left:683.3px;top:96.95px;"><span class="k">RSP   </span><span class="red">OOOOOOOOOOCAF84O</span></div><div class="a m" style="left:683.3px;top:103.38px;"><span class="k">RSI   </span><span class="red">OOOOOOOO11121O8O</span></div><div class="a m" style="left:683.3px;top:109.81px;"><span class="k">RDI   </span><span class="red">OOOOOOOOOOOOOOOO</span></div><div class="a m" style="left:683.3px;top:122.67px;"><span class="k">R8    </span><span class="red">OOOOOOOO11121O8O</span></div><div class="a m" style="left:683.3px;top:129.10px;"><span class="k">R9    </span><span class="k">OOOOOOOOOOOOOOOO</span></div><div class="a m" style="left:683.3px;top:135.53px;"><span class="k">R1O   </span><span class="red">OOOOOOOOOOOOOOOO</span></div><div class="a m" style="left:683.3px;top:141.96px;"><span class="k">R11   </span><span class="red">OOOOOOOO11121O9O</span></div><div class="a m" style="left:683.3px;top:148.39px;"><span class="k">R12   </span><span class="red">OOOOOOOOOOOOOOO4</span></div><div class="a m" style="left:683.3px;top:154.82px;"><span class="k">R13   </span><span class="k">OOOOOOOOOOOOOOOO</span></div><div class="a m" style="left:683.3px;top:161.25px;"><span class="k">R14   </span><span class="red">OOOOOOOO1112165O</span></div><div class="a m" style="left:683.3px;top:167.68px;"><span class="k">R15   </span><span class="red">OOOOOOOO1OOOOOOO</span></div><div class="a m" style="left:683.3px;top:180.54px;"><span class="k">RIP   </span><span class="red">OOOO7FF7685CC7A3</span><span class="k">     vmware-vmx.OOOO7FF7685CC7A3</span></div><div class="a m" style="left:683.3px;top:193.40px;"><span class="k">RFLAGS   OOOOOOOOOOOOO344</span></div><div class="a m" style="left:683.3px;top:199.83px;"><span class="k">ZF 1  PF 1  AF O</span></div><div class="a m" style="left:683.3px;top:206.26px;"><span class="k">OF O  SF O  DF O</span></div><div class="a m" style="left:683.3px;top:212.69px;"><span class="k">CF O  TF 1  IF 1</span></div><div class="a m" style="left:683.3px;top:225.55px;"><span class="k">LastError OOOOOOOO (ERROR_SUCCESS)</span></div><div class="a m" style="left:683.3px;top:238.41px;"><span class="k">GS OO2B  FS OO53</span></div><div class="a m" style="left:683.3px;top:244.84px;"><span class="k">ES OO2B  DS OO2B</span></div><div class="a m" style="left:683.3px;top:251.27px;"><span class="k">CS OO33  SS OO2B</span></div><div class="a m" style="left:683.3px;top:264.13px;"><span class="k">x87rO </span><span class="red">6174696F6E2F787O4D6F</span><span class="k"> STO Nonzero </span><span class="red">nan</span></div><div class="a m" style="left:683.3px;top:270.56px;"><span class="k">x87r1 </span><span class="red">626C653OOOOOOOOOOOOO</span><span class="k"> ST1 Nonzero </span><span class="red">O</span></div><div class="a m" style="left:683.3px;top:276.99px;"><span class="k">x87r2 </span><span class="red">OFOOOOOOOOOOOOOOC7O7</span><span class="k"> ST2 Nonzero </span><span class="red">nan</span></div><div class="a m" style="left:683.3px;top:283.42px;"><span class="k">x87r3 </span><span class="red">OOOOE8OOOOOOOOOOOOOO</span><span class="k"> ST3 Nonzero </span><span class="red">O</span></div><div class="a m" style="left:683.3px;top:289.85px;"><span class="k">x87r4 </span><span class="red">OFOOOOOOOOOOOOOOOOOO</span><span class="k"> ST4 Nonzero </span><span class="red">O</span></div><div class="a m" style="left:683.3px;top:296.28px;"><span class="k">x87r5 </span><span class="red">OOOOFCOOOOOOOOOO5OFB</span><span class="k"> ST5 Nonzero </span><span class="red">nan</span></div><div class="a m" style="left:683.3px;top:302.71px;"><span class="k">x87r6 </span><span class="k">OOOOOOOOOOOOOOOOO5OO</span><span class="k"> ST6 Nonzero </span><span class="k">nan</span></div><div class="a m" style="left:683.3px;top:309.14px;"><span class="k">x87r7 </span><span class="red">5OOOOOOOOOOOOOOOO8OO</span><span class="k"> ST7 Nonzero </span><span class="red">nan</span></div><div class="a m" style="left:683.3px;top:322.00px;"><span class="k">x87TagWord OOOO</span></div><div class="a m" style="left:683.3px;top:328.43px;"><span class="k">x87TW_O O (Nonzero) x87TW_1 O (Nonzero)</span></div><div class="a m" style="left:683.3px;top:334.86px;"><span class="k">x87TW_2 O (Nonzero) x87TW_3 O (Nonzero)</span></div><div class="a m" style="left:683.3px;top:341.29px;"><span class="k">x87TW_4 O (Nonzero) x87TW_5 O (Nonzero)</span></div><div class="a m" style="left:683.3px;top:347.72px;"><span class="k">x87TW_6 O (Nonzero) x87TW_7 O (Nonzero)</span></div><div class="a m" style="left:683.3px;top:360.58px;"><span class="k">x87StatusWord OOOO</span></div><div class="a m" style="left:683.3px;top:367.01px;"><span class="k">x87SW_B  O  x87SW_C3  O  x87SW_C2  O</span></div><div class="a m" style="left:683.3px;top:373.44px;"><span class="k">x87SW_C1 O  x87SW_CO  O  x87SW_IR  O</span></div><div class="a " style="left:681.4px;top:76.4px;width:88px;height:8px;border:1px solid #30A040"></div><div class="a " style="left:681.4px;top:121.4px;width:88px;height:8px;border:1px solid #30A040"></div><div class="a s" style="left:772.8px;top:72px;width:250px;height:10px;font-family:'Liberation Sans';font-weight:bold;font-size:7.5px;line-height:10px;color:#1A1A1A">Pointer to the SECURITY_DESCRIPTOR structure to which the</div><div class="a s" style="left:772.8px;top:82px;width:250px;height:10px;font-family:'Liberation Sans';font-weight:bold;font-size:7.5px;line-height:10px;color:#1A1A1A">DACL will be added.</div><div class="a s" style="left:772.8px;top:116.6px;width:250px;height:10px;font-family:'Liberation Sans';font-weight:bold;font-size:7.5px;line-height:10px;color:#1A1A1A">Pointer to the ACL structure that specifies the DACL for the</div><div class="a s" style="left:772.8px;top:126.6px;width:250px;height:10px;font-family:'Liberation Sans';font-weight:bold;font-size:7.5px;line-height:10px;color:#1A1A1A">security descriptor.</div><div class="a " style="left:679px;top:386px;width:348px;height:143.5px;background:#A0A0A0"></div><div class="a cream" style="left:680px;top:387px;width:337px;height:133px;"></div><div class="a " style="left:744.5px;top:387.3px;width:272.5px;height:6.43px;background:#C0C0C0"></div><div class="a " style="left:680px;top:387.3px;width:64px;height:6.43px;background:#000"></div><div class="a " style="left:744.3px;top:387.3px;width:0.8px;height:133px;background:#D0D0D0"></div><div class="a " style="left:808.5px;top:387.3px;width:0.8px;height:133px;background:#D0D0D0"></div><div class="a m" style="left:682.5px;top:388.10px;"><span style="color:#D8E0F0">OOOOOOOOOOCAF84O</span></div><div class="a m" style="left:682.5px;top:394.53px;"><span style="color:#A0A0A0">OOOOOOOOOOCAF848</span></div><div class="a m" style="left:682.5px;top:400.96px;"><span style="color:#A0A0A0">OOOOOOOOOOCAF85O</span></div><div class="a m" style="left:682.5px;top:407.39px;"><span style="color:#A0A0A0">OOOOOOOOOOCAF858</span></div><div class="a m" style="left:682.5px;top:413.82px;"><span style="color:#A0A0A0">OOOOOOOOOOCAF86O</span></div><div class="a m" style="left:682.5px;top:420.25px;"><span style="color:#A0A0A0">OOOOOOOOOOCAF868</span></div><div class="a m" style="left:682.5px;top:426.68px;"><span style="color:#A0A0A0">OOOOOOOOOOCAF87O</span></div><div class="a m" style="left:682.5px;top:433.11px;"><span style="color:#A0A0A0">OOOOOOOOOOCAF878</span></div><div class="a m" style="left:682.5px;top:439.54px;"><span style="color:#A0A0A0">OOOOOOOOOOCAF88O</span></div><div class="a m" style="left:682.5px;top:445.97px;"><span style="color:#A0A0A0">OOOOOOOOOOCAF888</span></div><div class="a m" style="left:682.5px;top:452.40px;"><span style="color:#A0A0A0">OOOOOOOOOOCAF89O</span></div><div class="a m" style="left:682.5px;top:458.83px;"><span style="color:#A0A0A0">OOOOOOOOOOCAF898</span></div><div class="a m" style="left:682.5px;top:465.26px;"><span style="color:#A0A0A0">OOOOOOOOOOCAF8AO</span></div><div class="a m" style="left:682.5px;top:471.69px;"><span style="color:#A0A0A0">OOOOOOOOOOCAF8A8</span></div><div class="a m" style="left:682.5px;top:478.12px;"><span style="color:#A0A0A0">OOOOOOOOOOCAF8BO</span></div><div class="a m" style="left:682.5px;top:484.55px;"><span style="color:#A0A0A0">OOOOOOOOOOCAF8B8</span></div><div class="a m" style="left:682.5px;top:490.98px;"><span style="color:#A0A0A0">OOOOOOOOOOCAF8CO</span></div><div class="a m" style="left:682.5px;top:497.41px;"><span style="color:#A0A0A0">OOOOOOOOOOCAF8C8</span></div><div class="a m" style="left:682.5px;top:503.84px;"><span style="color:#A0A0A0">OOOOOOOOOOCAF8DO</span></div><div class="a m" style="left:682.5px;top:510.27px;"><span style="color:#A0A0A0">OOOOOOOOOOCAF8D8</span></div><div class="a m" style="left:682.5px;top:516.70px;"><span style="color:#A0A0A0">OOOOOOOOOOCAF8EO</span></div><div class="a m" style="left:746.8px;top:388.10px;color:#262626">OOOOOOOOOOOOOOOO</div><div class="a m" style="left:746.8px;top:394.53px;color:#262626">OOOOOOOOOOOOOOO6</div><div class="a m" style="left:746.8px;top:400.96px;color:#262626">OOOOB8D881D73285</div><div class="a m" style="left:746.8px;top:407.39px;color:#262626">OOOOOOOOOOOOO21O</div><div class="a m" style="left:746.8px;top:413.82px;color:#262626">OOOOOOOOOOCAF9OO</div><div class="a m" style="left:746.8px;top:420.25px;color:#262626">OOOOOOOOOOCAF948</div><div class="a m" style="left:746.8px;top:426.68px;color:#262626">OOOOOOOOOOOOOOOO</div><div class="a m" style="left:746.8px;top:433.11px;color:#262626">OOOOOOOOOOOOOOOO</div><div class="a m" style="left:746.8px;top:439.54px;color:#262626">OOOOOOOO1112164O</div><div class="a m" style="left:746.8px;top:445.97px;color:#262626">OOOOOOOOOOCAF95O</div><div class="a m" style="left:746.8px;top:452.40px;color:#262626">OOOOOOOOOOCAF93O</div><div class="a m" style="left:746.8px;top:458.83px;color:#262626">OOOO7FF76B6OCBO3</div><div class="a m" style="left:746.8px;top:465.26px;color:#262626">OOOOOOOOOOOOOOOO</div><div class="a m" style="left:746.8px;top:471.69px;color:#262626">OOOOOOOOO28OC478</div><div class="a m" style="left:746.8px;top:478.12px;color:#262626">OOOOOOOOO43DF86O</div><div class="a m" style="left:746.8px;top:484.55px;color:#262626">OOOOOOOOO43DFBCO</div><div class="a m" style="left:746.8px;top:490.98px;color:#262626">OOOOOOOOO43DFBCO</div><div class="a m" style="left:746.8px;top:497.41px;color:#262626">OOOOOOOOO41D657O</div><div class="a m" style="left:746.8px;top:503.84px;color:#262626">OOOOOOOOO41D6D4O</div><div class="a m" style="left:746.8px;top:510.27px;color:#262626">OOOO7FF76B93DA5F</div><div class="a m" style="left:746.8px;top:516.70px;color:#262626">OOOOOOOOOOOOO1F4</div><div class="a" style="left:810.4px;top:387.3px;width:207px;height:133px;overflow:hidden"><div class="a m" style="left:0px;top:71.53px;"><span class="red">return to vmware-vmx.OOOO7FF76B6OCBO3 from vmware-vmx.OOOO7FF76B6OC</span></div><div class="a m" style="left:0px;top:97.25px;"><span class="k">"C:\\Program Files (x86)\\VMware\\VMware Workstation\\vmware</span></div><div class="a m" style="left:0px;top:103.68px;"><span class="k">"C:\\Program Files (x86)\\VMware\\VMware Workstation\\vmware</span></div><div class="a m" style="left:0px;top:110.11px;"><span class="k">"\\\\.\\pipe\\vmware.vprint.19O4.57O5.1O"</span></div><div class="a m" style="left:0px;top:116.54px;"><span class="k">"Global\\vmware.vprint-s.19O4.28145.11"</span></div><div class="a m" style="left:0px;top:122.97px;"><span class="red">return to vmware-vmx.OOOO7FF76B93DA5F from vmware-vmx.OOOO7FF76B93D</span></div></div><div class="a " style="left:1017px;top:387px;width:9px;height:133px;background:#F0F0F0"></div><div class="a " style="left:1018px;top:498px;width:7px;height:9.7px;background:#CDCDCD"></div><div class="a " style="left:680px;top:520px;width:346px;height:8.5px;background:#F0F0F0"></div><div class="a " style="left:689px;top:521px;width:91px;height:7px;background:#CDCDCD"></div><div class="a " style="left:0px;top:50px;width:2px;height:480px;background:#CCD0D4"></div><svg class="a" style="left:0;top:0" width="1030" height="558"><g fill="none" stroke="#484848" stroke-width="1"><path d="M670.3 56.5 L672.3 54.5 L674.3 56.5"/><path d="M670.3 342 L672.3 344 L674.3 342"/><path d="M99 350.5 L97 352.5 L99 354.5"/><path d="M662 350.5 L664 352.5 L662 354.5"/><path d="M670.5 393 L672.5 391 L674.5 393"/><path d="M670.5 514 L672.5 516 L674.5 514"/><path d="M7 522.5 L5 524.5 L7 526.5"/><path d="M663 522.5 L665 524.5 L663 526.5"/><path d="M1019.5 393.5 L1021.5 391.5 L1023.5 393.5"/><path d="M1019.5 514 L1021.5 516 L1023.5 514"/><path d="M685 522.5 L683 524.5 L685 526.5"/><path d="M1011 522.5 L1013 524.5 L1011 526.5"/></g></svg><div class="a " style="left:30px;top:533.3px;width:998px;height:10.2px;background:#FFFFFF;border:1px solid #C8C8C8"></div><div class="a s" style="left:1px;top:533.5px;width:40px;height:10px;font-size:7.3px;line-height:10px;color:#202838;transform:scaleX(0.77);transform-origin:0 0">Command:</div><div class="a " style="left:0px;top:544.5px;width:1027.5px;height:13.5px;background:#C8C8C8"></div><div class="a " style="left:0px;top:556.5px;width:1027.5px;height:1.5px;background:#B8B8B8"></div><div class="a " style="left:39.2px;top:545.5px;width:990px;height:11px;border-left:1px solid #A0A0A0;border-top:1px solid #B0B0B0"></div><div class="a " style="left:1px;top:546px;width:35px;height:10px;background:#FFFF00;border:1px dotted #D8D880"></div><div class="a s" style="left:9px;top:547px;width:40px;height:10px;font-size:7.2px;line-height:10px;color:#FF4000;transform:scaleX(0.78);transform-origin:0 0">Paused</div><div class="a s" style="left:41px;top:547px;width:300px;height:10px;font-size:7.3px;line-height:10px;color:#202838;transform:scaleX(0.81);transform-origin:0 0">Dump: 0000000011121080 -&gt; 0000000011121087 (0x00000008 bytes)</div>
</body></html>
